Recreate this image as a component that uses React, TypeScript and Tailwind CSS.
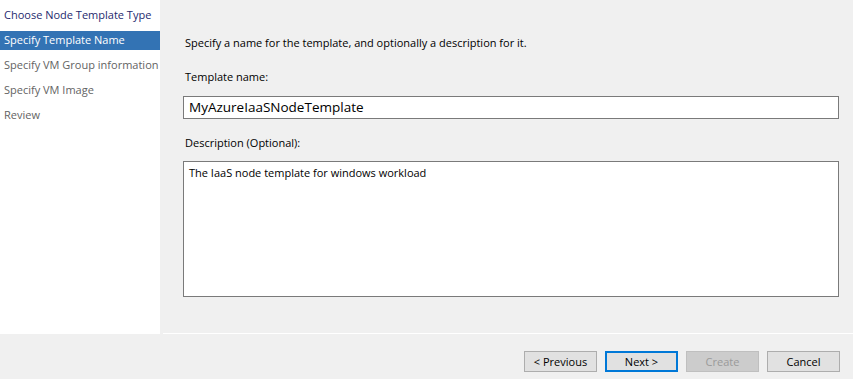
import React from 'react';

const steps = [
  { label: 'Choose Node Template Type', state: 'done' },
  { label: 'Specify Template Name', state: 'active' },
  { label: 'Specify VM Group information', state: 'todo' },
  { label: 'Specify VM Image', state: 'todo' },
  { label: 'Review', state: 'todo' },
];

export default function App() {
  return (
    <div className="w-[853px] h-[379px] bg-[#f0f0f0] font-['Open_Sans','Noto_Sans',sans-serif] text-[11px] text-black flex flex-col overflow-hidden">
      {/* Wizard body */}
      <div className="flex h-[334px]">
        <div className="w-[160px] bg-white pt-[6px]">
          {steps.map((s) => (
            <div
              key={s.label}
              className={`h-[19px] mb-[6px] pl-[4px] flex items-center whitespace-nowrap ${
                s.state === 'active'
                  ? 'bg-[#3373b4] text-white'
                  : s.state === 'done'
                  ? 'text-[#1e2a6e]'
                  : 'text-[#636363]'
              }`}
            >
              {s.label}
            </div>
          ))}
        </div>

        <div className="flex-1 flex flex-col">
          <div className="flex-1 pl-[23px] pr-[14px] pt-[35px]">
            <p className="pl-[2px] leading-[16px]">Specify a name for the template, and optionally a description for it.</p>

            <label className="block pl-[2px] mt-[18px] leading-[16px]">Template name:</label>
            <div className="mt-[11px] h-[23px] border border-[#7a7a7a] bg-white px-[5px] flex items-center text-[13.5px]">
              MyAzureIaaSNodeTemplate
            </div>

            <label className="block pl-[2px] mt-[16px] leading-[16px]">Description (Optional):</label>
            <div className="mt-[10px] h-[136px] border border-[#7a7a7a] bg-white px-[5px] pt-[3px] leading-[16px]">
              The IaaS node template for windows workload
            </div>
          </div>
          <div className="h-[1px] ml-[3px] bg-white" />
        </div>
      </div>

      {/* Footer buttons */}
      <div className="flex-1 flex justify-end items-start gap-[8px] pt-[17px] pr-[13px]">
        <button className="w-[73px] h-[21px] bg-[#e1e1e1] border border-[#adadad] leading-none">&lt; Previous</button>
        <button className="w-[73px] h-[21px] bg-[#e1e1e1] border-2 border-[#0078d7] leading-none">Next &gt;</button>
        <button className="w-[73px] h-[21px] bg-[#cccccc] border border-[#bfbfbf] text-[#9a9a9a] leading-none">Create</button>
        <button className="w-[73px] h-[21px] bg-[#e1e1e1] border border-[#adadad] leading-none">Cancel</button>
      </div>
    </div>
  );
}
